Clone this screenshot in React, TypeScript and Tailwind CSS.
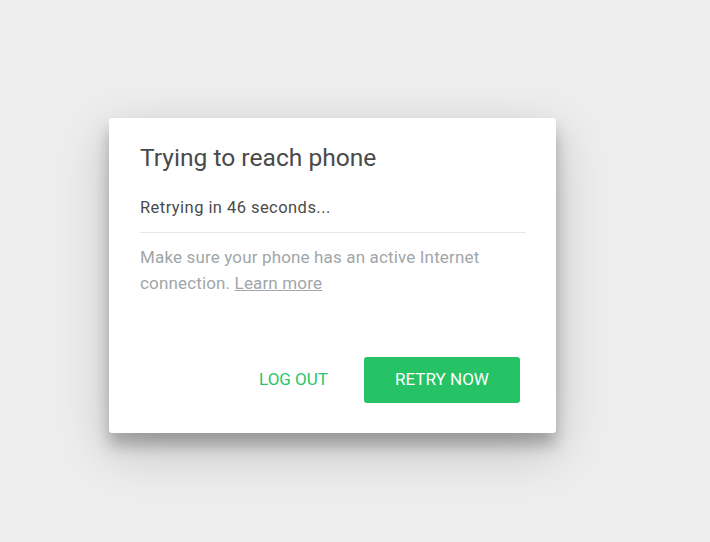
export default function App() {
  return (
    <div
      className="min-h-screen w-full bg-[#ededed] pl-[109px] pt-[118px]"
      style={{ fontFamily: "Roboto, 'Liberation Sans', sans-serif" }}
    >
      <div className="flex h-[315px] w-[447px] flex-col rounded-[3px] bg-white pl-[31px] pr-[30px] pt-[26px] pb-[30px] shadow-[0_17px_50px_rgba(0,0,0,0.2),0_12px_15px_rgba(0,0,0,0.24)]">
        <h1 className="text-[24.6px] leading-[28px] text-[#4a4a4a]">Trying to reach phone</h1>
        <p className="mt-[26px] text-[16.5px] leading-[20px] tracking-[0.45px] text-[#4b4b4b]">Retrying in 46 seconds...</p>
        <div className="mt-[14px] h-px bg-[#e6e6e6]" />
        <p className="mt-[11px] text-[17px] leading-[26px] tracking-[0.15px] text-[#a0a6a9]">
          Make sure your phone has an active Internet connection.{" "}
          <a className="underline text-[#a0a6a9]">Learn more</a>
        </p>
        <div className="mt-auto flex items-center justify-end gap-[36px] pr-[6px]">
          <button className="px-0 text-[17px] uppercase text-[#2cc46a]">Log out</button>
          <button className="h-[46px] w-[156px] rounded-[3px] bg-[#25c366] text-[17px] uppercase text-white">
            Retry now
          </button>
        </div>
      </div>
    </div>
  );
}
